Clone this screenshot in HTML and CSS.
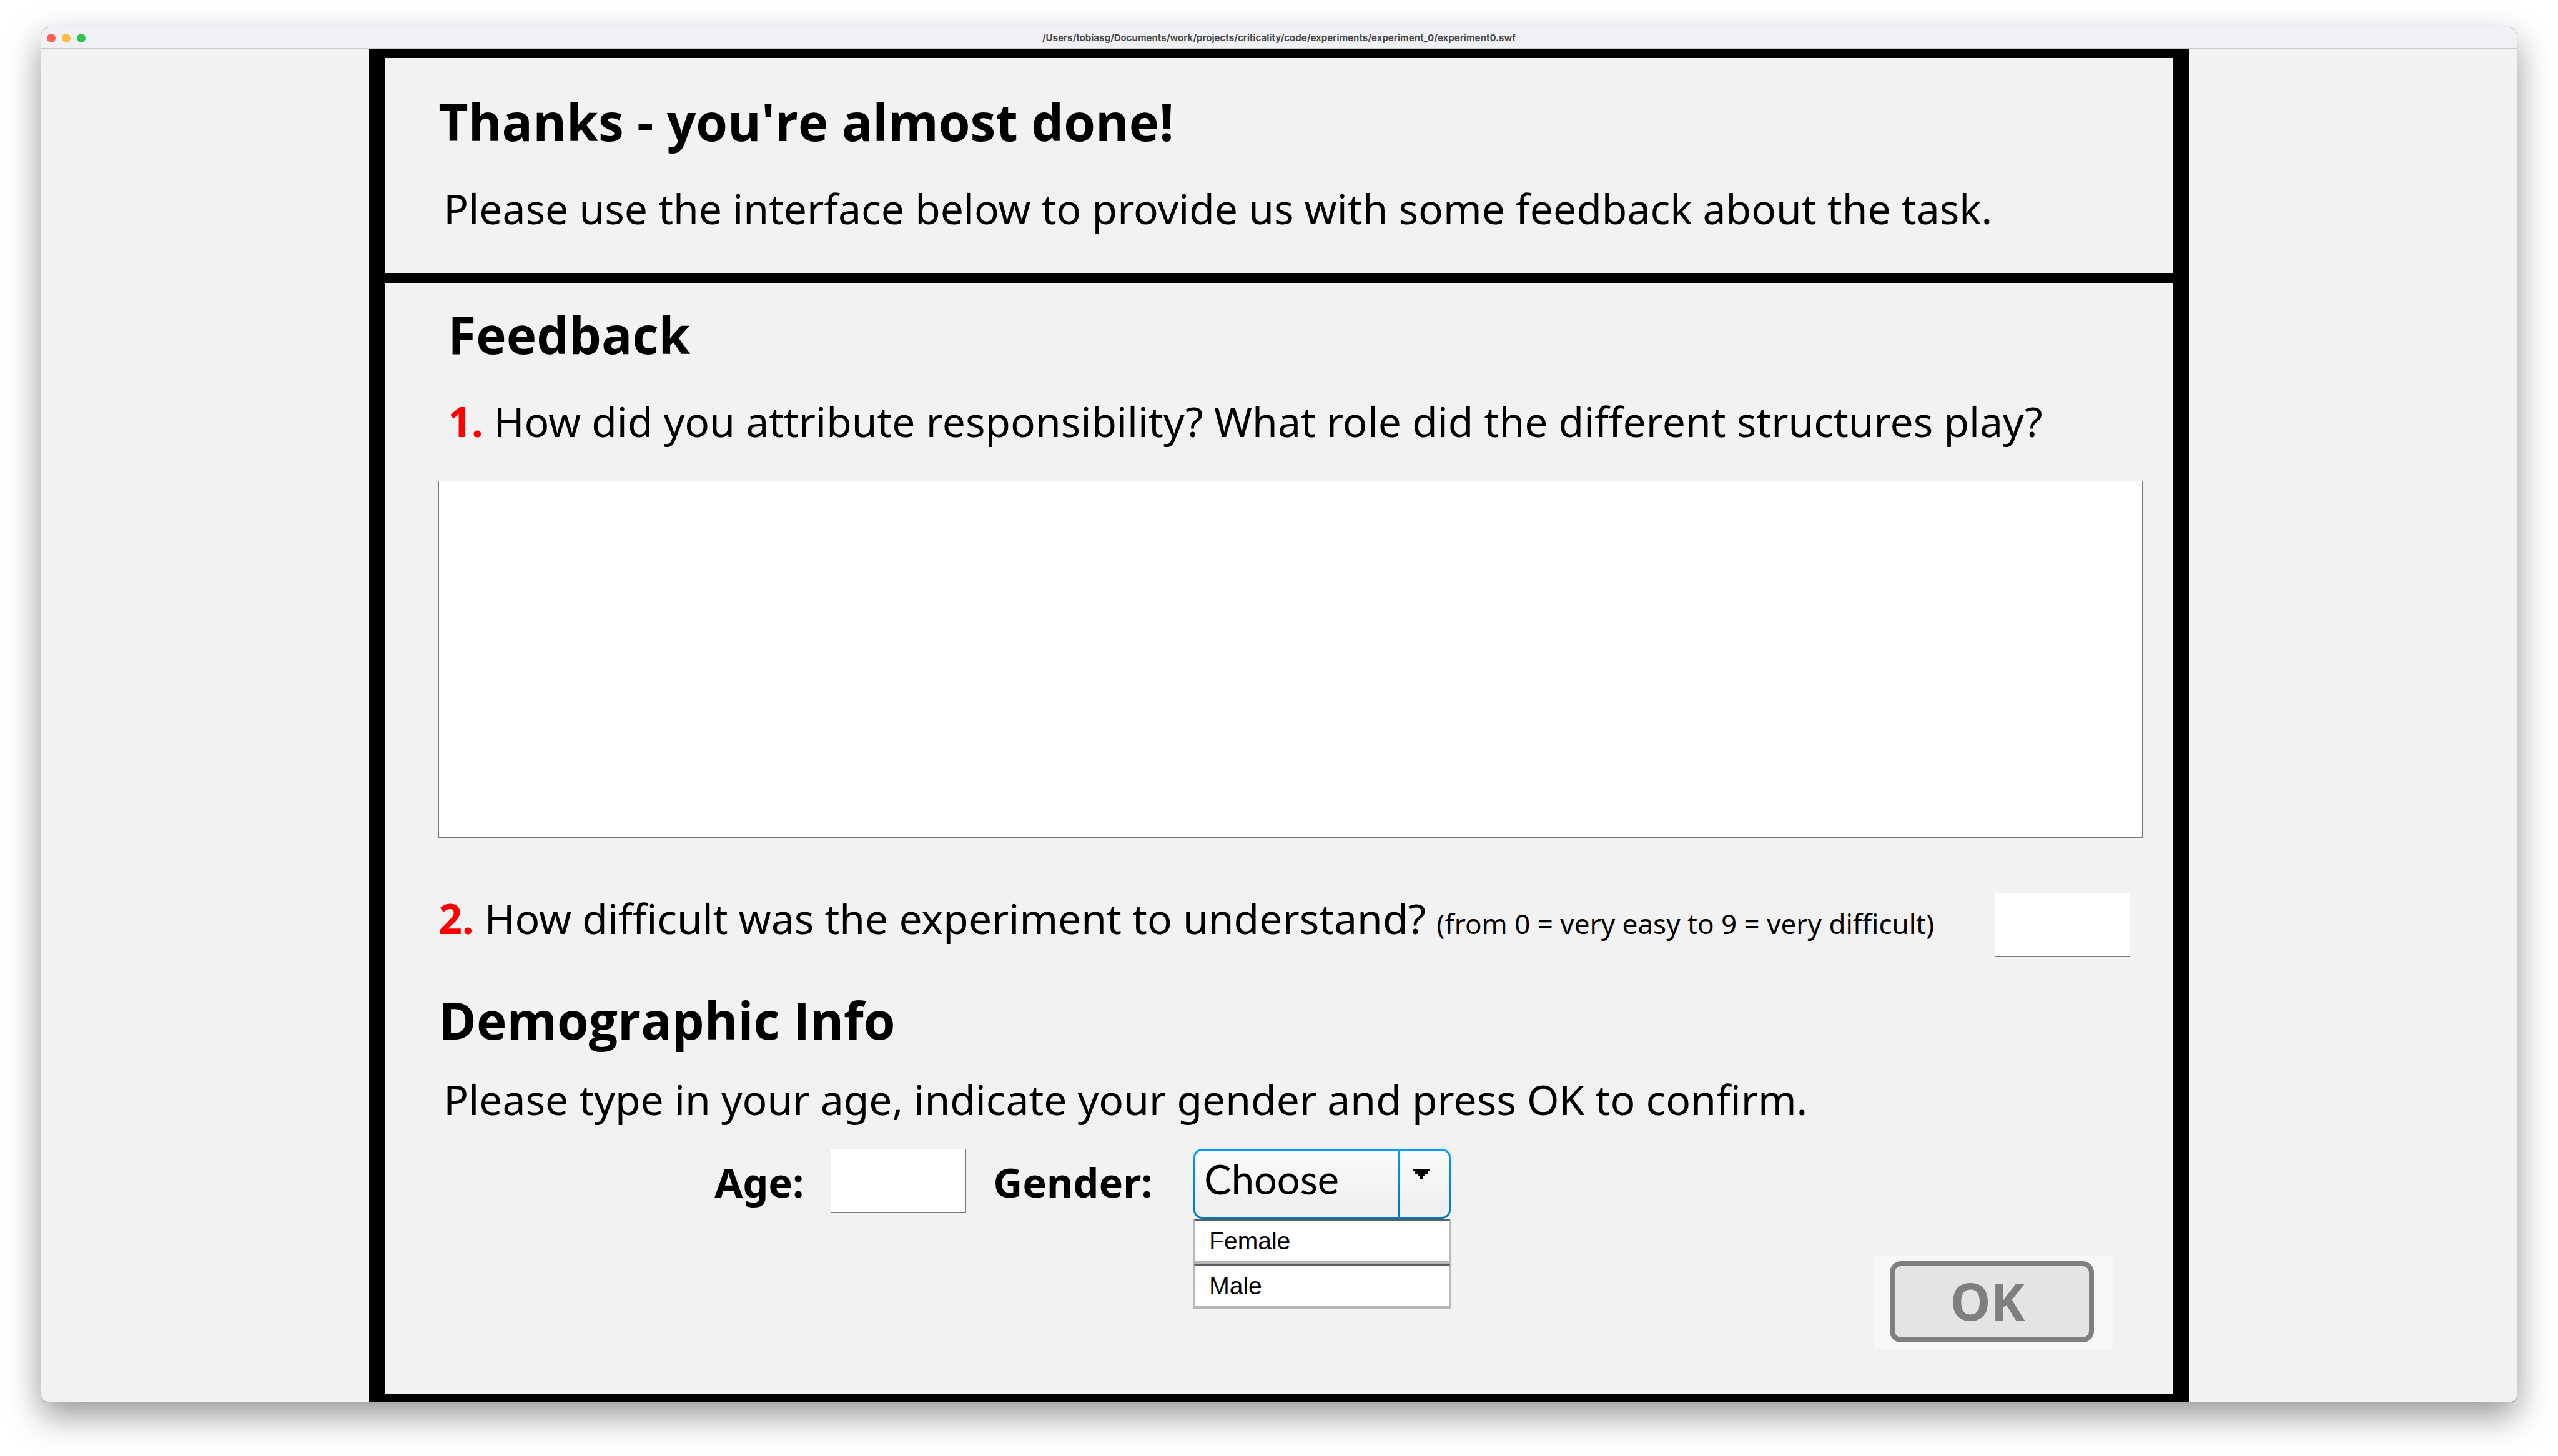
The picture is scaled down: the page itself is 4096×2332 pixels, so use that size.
FILE: index.html
```html
<!DOCTYPE html>
<html lang="en">
<head>
<meta charset="utf-8">
<title>experiment0.swf</title>
<link rel="stylesheet" href="styles.css">
</head>
<body>
<div class="window">
  <header class="titlebar">
    <div class="lights">
      <span class="light light-close"></span>
      <span class="light light-minimize"></span>
      <span class="light light-zoom"></span>
    </div>
    <div class="path">/Users/tobiasg/Documents/work/projects/criticality/code/experiments/experiment_0/experiment0.swf</div>
  </header>
  <main class="stage">
    <form class="sheet">
      <section class="intro">
        <h1 class="heading">Thanks - you're almost done!</h1>
        <p class="text inset-small">Please use the interface below to provide us with some feedback about the task.</p>
      </section>
      <section class="survey">
        <h2 class="heading inset">Feedback</h2>
        <label class="text inset" for="roles"><b class="number">1.</b> How did you attribute responsibility? What role did the different structures play?</label>
        <textarea class="box answer" id="roles"></textarea>
        <div class="rating">
          <label class="text" for="difficulty"><b class="number">2.</b> How difficult was the experiment to understand? <small class="hint">(from 0 = very easy to 9 = very difficult)</small></label>
          <input class="box entry" id="difficulty" type="text">
        </div>
        <h2 class="heading demographic">Demographic Info</h2>
        <p class="text inset-small">Please type in your age, indicate your gender and press OK to confirm.</p>
        <div class="details">
          <label class="text field-label" for="age">Age:</label>
          <input class="box entry" id="age" type="text">
          <label class="text field-label" for="gender">Gender:</label>
          <div class="combo">
            <div class="combo-face">
              <select class="combo-select" id="gender">
                <option>Choose</option>
                <option>Female</option>
                <option>Male</option>
              </select>
              <span class="combo-arrow">
                <svg width="28" height="16" viewBox="0 0 28 16" shape-rendering="crispEdges" aria-hidden="true"><path d="M0 0H28V4H24V8H20V12H16V16H12V12H8V8H4V4H0Z"/></svg>
              </span>
            </div>
            <ul class="combo-list">
              <li class="combo-option">Female</li>
              <li class="combo-option">Male</li>
            </ul>
          </div>
        </div>
        <div class="confirm">
          <button class="ok" type="button">OK</button>
        </div>
      </section>
    </form>
  </main>
</div>
</body>
</html>
```
FILE: styles.css
```css
* {
  box-sizing: border-box;
}

body {
  margin: 0;
  padding: 44px 66px 87px;
  background: #fff;
  color: #000;
  font-family: "Noto Sans", "Open Sans", sans-serif;
}

.window {
  display: flex;
  flex-direction: column;
  min-height: calc(100vh - 131px);
  border-radius: 14px 14px 10px 10px;
  background: #f2f2f2;
  box-shadow: 0 0 0 1px rgba(0, 0, 0, 0.2), 0 22px 54px rgba(0, 0, 0, 0.42);
  overflow: hidden;
}

.titlebar {
  display: grid;
  grid-template-columns: 1fr auto 1fr;
  align-items: center;
  height: 34px;
  padding: 0 9px;
  border-bottom: 1px solid #cbcbcb;
  background: #f0f1f4;
}

.lights {
  display: flex;
  gap: 10px;
}

.light {
  width: 14px;
  height: 14px;
  border-radius: 50%;
}

.light-close {
  background: #ff5f57;
}

.light-minimize {
  background: #febc45;
}

.light-zoom {
  background: #30c553;
}

.path {
  color: #4a4a4a;
  font: bold 15px/20px Inter, sans-serif;
}

.stage {
  display: flex;
  flex: 1;
  justify-content: center;
}

.sheet {
  display: flex;
  flex-direction: column;
  width: 73.5%;
  border: solid #000;
  border-width: 15px 25px 13px;
}

.intro {
  padding: 51px 49px 65px 86px;
  border-bottom: 15px solid #000;
}

.survey {
  flex: 1;
  padding: 32px 49px 70px 86px;
}

.heading {
  margin: 0 0 49px;
  font: bold 82px/100px "Open Sans", "Noto Sans", sans-serif;
}

.text {
  display: block;
  margin: 0;
  font-size: 66px;
  line-height: 80px;
  white-space: nowrap;
}

.inset-small {
  margin-left: 8px;
}

.inset {
  margin-left: 15px;
}

.number {
  color: #f00;
}

.hint {
  font-size: 44px;
}

.box {
  display: block;
  margin: 0;
  padding: 8px 16px;
  border: 1px solid #777;
  border-radius: 0;
  background: #fff;
  font: 66px/80px "Noto Sans", sans-serif;
  outline: none;
}

.answer {
  width: 100%;
  height: 572px;
  margin-top: 56px;
  resize: none;
}

.rating {
  display: flex;
  justify-content: space-between;
  margin: 88px 20px 51px 0;
}

.entry {
  width: 217px;
  height: 102px;
}

.demographic {
  margin-bottom: 37px;
}

.details {
  display: grid;
  grid-template-columns: 186px 260px 321px 412px;
  margin-top: 40px;
  padding-left: 442px;
}

.field-label {
  font-size: 65px;
  font-weight: bold;
  line-height: 106px;
}

.combo {
  position: relative;
}

.combo-face {
  display: grid;
  grid-template-columns: 1fr 81px;
  height: 112px;
  border: 3px solid transparent;
  border-radius: 14px;
  background:
    linear-gradient(#fbfbfb, #eee) padding-box,
    linear-gradient(#009dff, #0075c0) border-box;
}

.combo-select {
  grid-area: 1 / 1 / 2 / 3;
  padding: 0 0 16px 14px;
  border: 0;
  background: none;
  color: #000;
  font: 65px/80px Lato, sans-serif;
  appearance: none;
  outline: none;
}

.combo-arrow {
  grid-area: 1 / 2 / 2 / 3;
  padding: 29px 0 0 20px;
  border: solid;
  border-width: 0 0 0 3px;
  border-image: linear-gradient(#009dff, #0075c0) 1;
  pointer-events: none;
}

.combo-arrow svg {
  display: block;
}

.combo-list {
  position: absolute;
  top: 100%;
  left: 0;
  right: 0;
  margin: 0;
  padding: 0;
  list-style: none;
}

.combo-option {
  height: 72px;
  padding-left: 22px;
  border: solid #b5b9bc;
  border-width: 4px 3px;
  border-top-color: #5c5d60;
  background: #fff;
  font: 39px/64px "Liberation Sans", Arial, sans-serif;
}

.confirm {
  width: 383px;
  margin: 59px 48px 0 auto;
  padding: 9px 30px 11px 26px;
  background: #f8f8f8;
}

.ok {
  display: block;
  width: 100%;
  height: 130px;
  padding: 0 14px 4px 0;
  border: 8px solid #7f7f7f;
  border-radius: 18px;
  background: #e4e4e4;
  color: #7f7f7f;
  font: bold 82px/100px "Open Sans", sans-serif;
}
```
